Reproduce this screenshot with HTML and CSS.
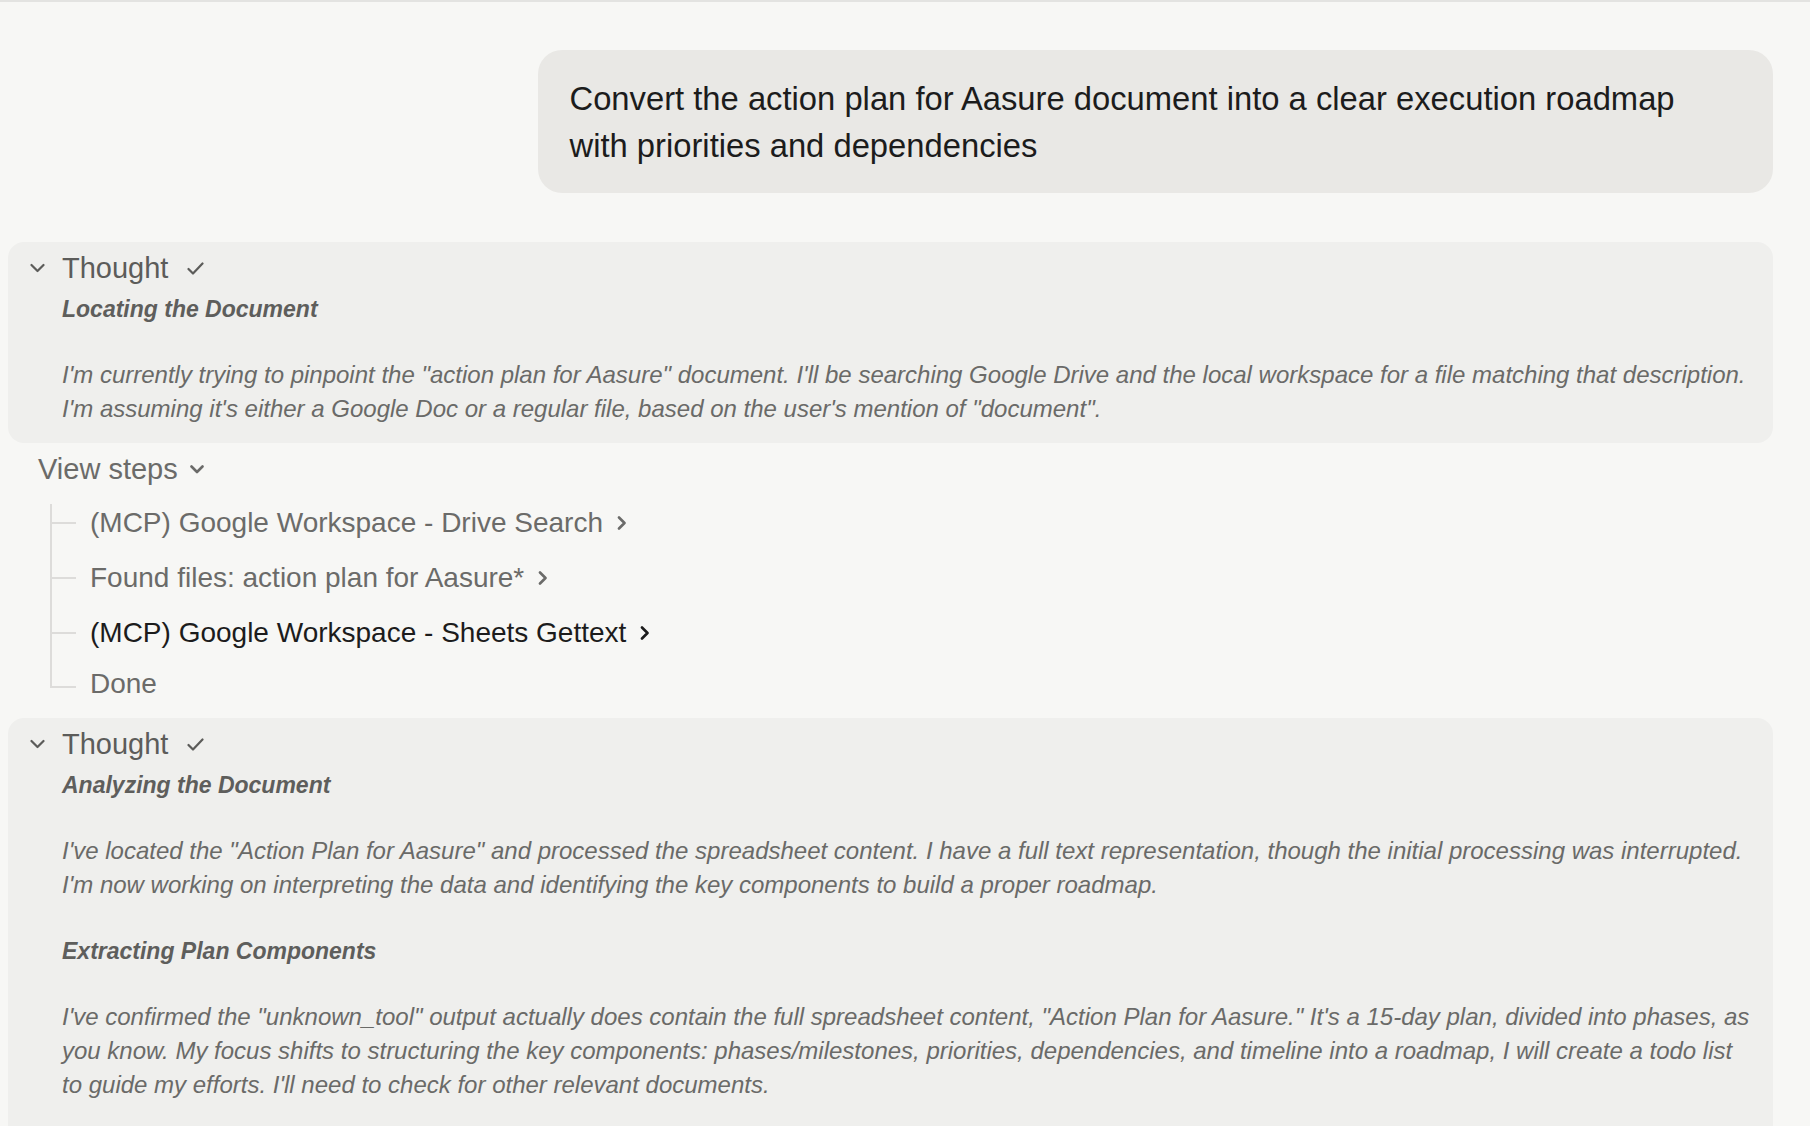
FILE: index.html
```html
<!DOCTYPE html>
<html lang="en">
<head>
    <meta charset="UTF-8">
    <meta name="viewport" content="width=device-width, initial-scale=1.0">
    <title>Agent Chat</title>
    <link rel="stylesheet" href="styles.css">
</head>
<body>
    <div class="topline"></div>
    <main class="chat">
        <div class="user-row">
            <div class="user-msg">Convert the action plan for Aasure document into a clear execution roadmap with priorities and dependencies</div>
        </div>

        <section class="thought">
            <div class="thought-head">
                <svg class="icon-down" width="15" height="10" viewBox="0 0 15 10"><polyline points="1.5,2 7.5,8 13.5,2"/></svg>
                <span>Thought</span>
                <svg class="icon-check" width="17" height="13" viewBox="0 0 17 13"><polyline points="1.5,7 6,11.5 15.5,1.5"/></svg>
            </div>
            <div class="thought-body">
                <p class="thought-title">Locating the Document</p>
                <p>I'm currently trying to pinpoint the "action plan for Aasure" document. I'll be searching Google Drive and the local workspace for a file matching that description. I'm assuming it's either a Google Doc or a regular file, based on the user's mention of "document".</p>
            </div>
        </section>

        <div class="steps">
            <div class="steps-toggle">
                <span>View steps</span>
                <svg class="icon-small-down" width="14" height="9" viewBox="0 0 14 9"><polyline points="1.5,1.5 7,7 12.5,1.5"/></svg>
            </div>
            <ul class="step-list">
                <li>(MCP) Google Workspace - Drive Search <svg class="icon-right" width="10" height="14" viewBox="0 0 10 14"><polyline points="2,1.5 7.5,7 2,12.5"/></svg></li>
                <li>Found files: action plan for Aasure* <svg class="icon-right" width="10" height="14" viewBox="0 0 10 14"><polyline points="2,1.5 7.5,7 2,12.5"/></svg></li>
                <li class="active">(MCP) Google Workspace - Sheets Gettext <svg class="icon-right" width="10" height="14" viewBox="0 0 10 14"><polyline points="2,1.5 7.5,7 2,12.5"/></svg></li>
                <li>Done</li>
            </ul>
        </div>

        <section class="thought">
            <div class="thought-head">
                <svg class="icon-down" width="15" height="10" viewBox="0 0 15 10"><polyline points="1.5,2 7.5,8 13.5,2"/></svg>
                <span>Thought</span>
                <svg class="icon-check" width="17" height="13" viewBox="0 0 17 13"><polyline points="1.5,7 6,11.5 15.5,1.5"/></svg>
            </div>
            <div class="thought-body">
                <p class="thought-title">Analyzing the Document</p>
                <p>I've located the "Action Plan for Aasure" and processed the spreadsheet content. I have a full text representation, though the initial processing was interrupted. I'm now working on interpreting the data and identifying the key components to build a proper roadmap.</p>
                <p class="thought-title">Extracting Plan Components</p>
                <p>I've confirmed the "unknown_tool" output actually does contain the full spreadsheet content, "Action Plan for Aasure." It's a 15-day plan, divided into phases, as you know. My focus shifts to structuring the key components: phases/milestones, priorities, dependencies, and timeline into a roadmap, I will create a todo list to guide my efforts. I'll need to check for other relevant documents.</p>
            </div>
        </section>
    </main>
</body>
</html>
```

FILE: styles.css
```css
body {
    margin: 0;
    background-color: #f7f7f5;
    font-family: "Liberation Sans", Arial, sans-serif;
    color: #222;
}
.topline {
    height: 2px;
    background-color: #e3e3e1;
}
.chat {
    padding: 0 37px 40px 8px;
}

/* user message bubble */
.user-row {
    display: flex;
    justify-content: flex-end;
    padding-top: 48px;
}
.user-msg {
    width: 70%;
    box-sizing: border-box;
    padding: 25px 48px 24px 32px;
    background-color: #e9e8e5;
    border-radius: 24px;
    font-size: 32.75px;
    line-height: 47px;
    color: #1c1c1c;
}

/* thought blocks */
.thought {
    background-color: #efefed;
    border-radius: 16px;
    padding: 8px 22px 17px 22px;
    margin-top: 49px;
}
.steps + .thought {
    margin-top: 10px;
}
.thought:last-child {
    padding-bottom: 60px;
    border-bottom-left-radius: 0;
    border-bottom-right-radius: 0;
}
.thought-head {
    display: flex;
    align-items: center;
    height: 36px;
    font-size: 29px;
    color: #5c5c5a;
}
.thought-head .icon-down {
    margin-right: 17px;
}
.thought-head .icon-check {
    margin-left: 19px;
}
.thought-head svg polyline {
    fill: none;
    stroke: #5c5c5a;
    stroke-width: 2.2;
    stroke-linecap: round;
    stroke-linejoin: round;
}
.thought-body {
    padding: 6px 0 0 32px;
    font-size: 24px;
    line-height: 34px;
    font-style: italic;
    color: #6a6a68;
}
.thought-body p {
    margin: 32px 0 0;
}
.thought-body p:first-child {
    margin-top: 0;
}
.thought-title {
    font-size: 23px;
    font-weight: bold;
    color: #5e5e5c;
}

/* tool steps */
.steps {
    padding-top: 8px;
}
.steps-toggle {
    display: flex;
    align-items: center;
    height: 36px;
    padding-left: 30px;
    font-size: 29px;
    color: #6b6b69;
}
.steps-toggle svg {
    margin-left: 12px;
}
.steps-toggle svg polyline,
.step-list svg polyline {
    fill: none;
    stroke: #6b6b69;
    stroke-width: 2.6;
    stroke-linecap: round;
    stroke-linejoin: round;
}
.step-list {
    list-style: none;
    margin: 8px 0 0 42px;
    padding: 0;
}
.step-list li {
    display: flex;
    align-items: center;
    height: 55px;
    padding-left: 40px;
    font-size: 28px;
    color: #6b6b69;
    background:
        linear-gradient(#dddcda, #dddcda) 0 0 / 2px 100% no-repeat,
        linear-gradient(#dddcda, #dddcda) 0 50% / 26px 2px no-repeat;
}
.step-list li:first-child {
    background:
        linear-gradient(#dddcda, #dddcda) 0 9px / 2px calc(100% - 9px) no-repeat,
        linear-gradient(#dddcda, #dddcda) 0 50% / 26px 2px no-repeat;
}
.step-list li:last-child {
    height: 48px;
    background:
        linear-gradient(#dddcda, #dddcda) 0 0 / 2px calc(50% + 3px) no-repeat,
        linear-gradient(#dddcda, #dddcda) 0 calc(50% + 3px) / 26px 2px no-repeat;
}
.step-list svg {
    margin-left: 14px;
}
.step-list li.active {
    color: #1c1c1c;
}
.step-list li.active svg polyline {
    stroke: #1c1c1c;
}
```
